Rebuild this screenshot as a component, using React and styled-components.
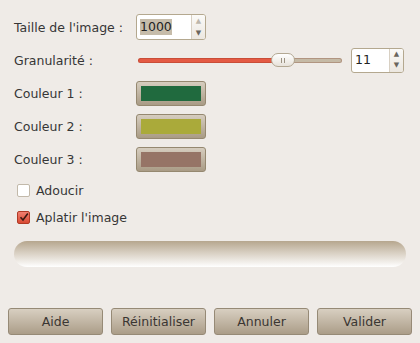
import React from "react";
import styled, { createGlobalStyle } from "styled-components";

const Global = createGlobalStyle`
  html, body { margin: 0; padding: 0; }
  body {
    background: #efebe7;
    font-family: "DejaVu Sans", "Liberation Sans", sans-serif;
    font-size: 12.5px;
    color: #363636;
  }
`;

const Dialog = styled.div`
  width: 420px;
  height: 343px;
  box-sizing: border-box;
  display: flex;
  flex-direction: column;
  padding: 14px 8px 8px 8px;
`;

const Form = styled.div`
  display: grid;
  grid-template-columns: 122px 1fr;
  grid-auto-rows: 26px;
  row-gap: 7px;
  padding-left: 6px;
  align-items: center;
`;

const Label = styled.div`
  white-space: nowrap;
`;

const Cell = styled.div`
  display: flex;
  align-items: center;
`;

const Spin = styled.div`
  display: flex;
  width: ${(p) => p.$w}px;
  height: ${(p) => p.$h}px;
  box-sizing: border-box;
  border: 1px solid #b4a88f;
  border-radius: 3px;
  background: #ffffff;
  overflow: hidden;
  margin-left: ${(p) => p.$ml || 0}px;
`;

const SpinText = styled.div`
  flex: 1;
  display: flex;
  align-items: center;
  padding-left: 3px;
  font-size: 12.5px;
  color: #222;
`;

const Sel = styled.span`
  background: ${(p) => (p.$sel ? "#c6bcaa" : "transparent")};
  padding: 1px 0;
  line-height: 14px;
`;

const SpinBtns = styled.div`
  width: 13px;
  border-left: 1px solid #d8d0c3;
  display: flex;
  flex-direction: column;
  align-items: center;
  justify-content: space-around;
  background: linear-gradient(#fbfaf8, #ece7e0);
  font-size: 7px;
  line-height: 7px;
`;

const Arrow = styled.span`
  color: ${(p) => (p.$dim ? "#bdb6ab" : "#6a655d")};
`;

const SliderWrap = styled.div`
  position: relative;
  width: 204px;
  height: 14px;
  margin-left: 2px;
  display: flex;
  align-items: center;
`;

const Trough = styled.div`
  height: 5px;
  width: 100%;
  border-radius: 3px;
  background: linear-gradient(
    to right,
    #e45a44 0,
    #e45a44 ${(p) => p.$fill}px,
    #c5baa6 ${(p) => p.$fill}px
  );
  box-shadow: inset 0 0 0 1px rgba(120, 40, 20, 0.25);
`;

const Thumb = styled.div`
  position: absolute;
  top: 0;
  left: ${(p) => p.$x}px;
  width: 24px;
  height: 14px;
  box-sizing: border-box;
  border: 1px solid #b3a893;
  border-radius: 7px;
  background: linear-gradient(#ffffff, #e7e2da);
  display: flex;
  align-items: center;
  justify-content: center;
  gap: 2px;
`;

const Grip = styled.span`
  width: 1px;
  height: 5px;
  background: #9c9282;
`;

const ColorBtn = styled.div`
  width: 70px;
  height: 25px;
  box-sizing: border-box;
  border: 1px solid #958870;
  border-radius: 3px;
  background: linear-gradient(#d6cdbf, #a99b85);
  display: flex;
  align-items: center;
  justify-content: center;
`;

const Swatch = styled.div`
  width: 60px;
  height: 15px;
  background: ${(p) => p.$c};
`;

const Checks = styled.div`
  display: flex;
  flex-direction: column;
  gap: 7px;
  margin-top: 8px;
  padding-left: 9px;
`;

const CheckRow = styled.div`
  display: flex;
  align-items: center;
  height: 20px;
  gap: 6px;
`;

const Box = styled.div`
  width: 13px;
  height: 13px;
  box-sizing: border-box;
  border-radius: 2px;
  border: 1px solid ${(p) => (p.$on ? "#b03a26" : "#c2b9aa")};
  background: ${(p) => (p.$on ? "linear-gradient(#f08070, #d94a34)" : "#ffffff")};
  display: flex;
  align-items: center;
  justify-content: center;
`;

const Progress = styled.div`
  margin: 14px 6px 0 6px;
  height: 26px;
  border-radius: 13px;
  background: linear-gradient(#b6a68e 0%, #d8cfc2 45%, #ffffff 100%);
`;

const Spacer = styled.div`
  flex: 1;
`;

const Buttons = styled.div`
  display: grid;
  grid-template-columns: repeat(4, 95px);
  column-gap: 8px;
`;

const Button = styled.div`
  height: 27px;
  box-sizing: border-box;
  border: 1px solid #968a76;
  border-radius: 3px;
  background: linear-gradient(#d8cfc1, #ab9d88);
  display: flex;
  align-items: center;
  justify-content: center;
  color: #3a3632;
  font-size: 12.5px;
`;

function SpinBox({ value, w, h, ml, sel, dimUp }) {
  return (
    <Spin $w={w} $h={h} $ml={ml}>
      <SpinText>
        <Sel $sel={sel}>{value}</Sel>
      </SpinText>
      <SpinBtns>
        <Arrow $dim={dimUp}>▲</Arrow>
        <Arrow>▼</Arrow>
      </SpinBtns>
    </Spin>
  );
}

export default function App() {
  return (
    <>
      <Global />
      <Dialog>
        <Form>
          <Label>Taille de l'image :</Label>
          <Cell>
            <SpinBox value="1000" w={70} h={26} sel dimUp />
          </Cell>
          <Label>Granularité :</Label>
          <Cell>
            <SliderWrap>
              <Trough $fill={136} />
              <Thumb $x={133}>
                <Grip />
                <Grip />
              </Thumb>
            </SliderWrap>
            <SpinBox value="11" w={53} h={25} ml={9} />
          </Cell>
          <Label>Couleur 1 :</Label>
          <Cell>
            <ColorBtn>
              <Swatch $c="#206a3e" />
            </ColorBtn>
          </Cell>
          <Label>Couleur 2 :</Label>
          <Cell>
            <ColorBtn>
              <Swatch $c="#aaaa3a" />
            </ColorBtn>
          </Cell>
          <Label>Couleur 3 :</Label>
          <Cell>
            <ColorBtn>
              <Swatch $c="#967466" />
            </ColorBtn>
          </Cell>
        </Form>
        <Checks>
          <CheckRow>
            <Box />
            <span>Adoucir</span>
          </CheckRow>
          <CheckRow>
            <Box $on>
              <svg width="10" height="10" viewBox="0 0 10 10">
                <path d="M1.5 5.2 L4 8 L8.8 1.5" stroke="#3a1a12" strokeWidth="1.6" fill="none" />
              </svg>
            </Box>
            <span>Aplatir l'image</span>
          </CheckRow>
        </Checks>
        <Progress />
        <Spacer />
        <Buttons>
          <Button>Aide</Button>
          <Button>Réinitialiser</Button>
          <Button>Annuler</Button>
          <Button>Valider</Button>
        </Buttons>
      </Dialog>
    </>
  );
}
